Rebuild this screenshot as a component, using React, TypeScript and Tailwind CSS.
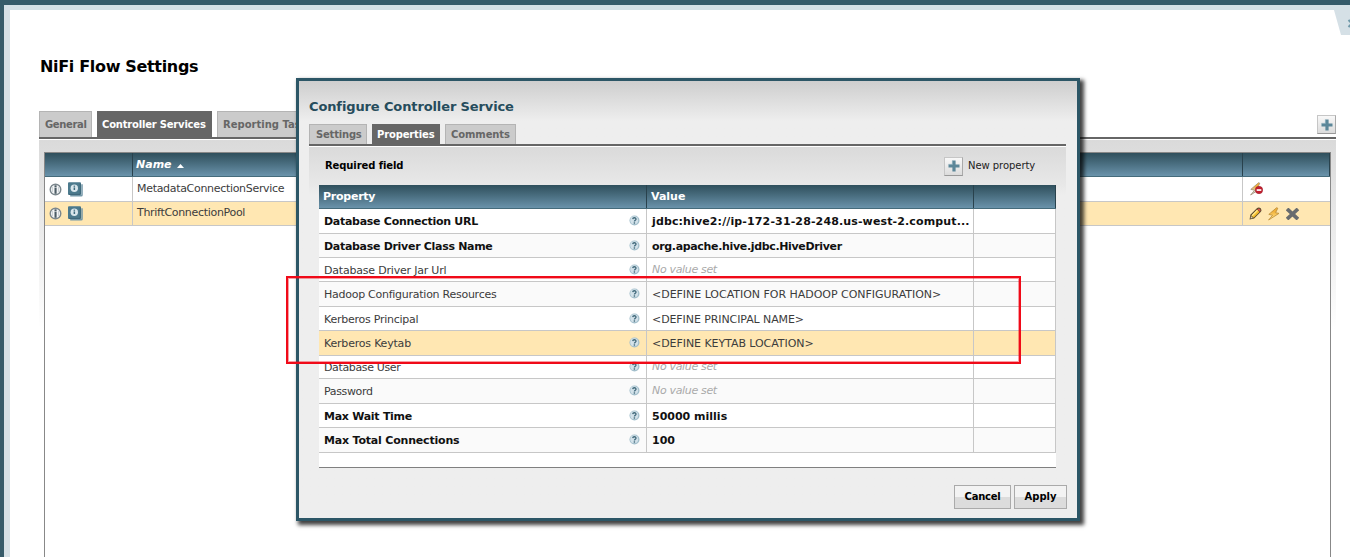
import React from "react";

type Property = { name: string; value?: string; required?: boolean; h: string; bg: string; nt: string; vt?: string };

const properties: Property[] = [
  { name: "Database Connection URL", value: "jdbc:hive2://ip-172-31-28-248.us-west-2.comput...", required: true, h: "h-[25px]", bg: "bg-white", nt: "tracking-[-0.28px]", vt: "tracking-[0.13px]" },
  { name: "Database Driver Class Name", value: "org.apache.hive.jdbc.HiveDriver", required: true, h: "h-[24px]", bg: "bg-[#fafafa]", nt: "tracking-[-0.3px]", vt: "tracking-[-0.34px]" },
  { name: "Database Driver Jar Url", h: "h-[24px]", bg: "bg-white", nt: "tracking-[-0.2px]" },
  { name: "Hadoop Configuration Resources", value: "<DEFINE LOCATION FOR HADOOP CONFIGURATION>", h: "h-[25px]", bg: "bg-[#fafafa]", nt: "tracking-[-0.26px]", vt: "tracking-[-0.03px]" },
  { name: "Kerberos Principal", value: "<DEFINE PRINCIPAL NAME>", h: "h-[24px]", bg: "bg-white", nt: "tracking-[-0.25px]", vt: "tracking-[-0.09px]" },
  { name: "Kerberos Keytab", value: "<DEFINE KEYTAB LOCATION>", h: "h-[25px]", bg: "bg-[#ffe7b2]", nt: "tracking-[-0.2px]", vt: "tracking-[-0.06px]" },
  { name: "Database User", h: "h-[23px]", bg: "bg-white", nt: "tracking-[-0.36px]" },
  { name: "Password", h: "h-[25px]", bg: "bg-[#fafafa]", nt: "tracking-[-0.35px]" },
  { name: "Max Wait Time", value: "50000 millis", required: true, h: "h-[24px]", bg: "bg-white", nt: "tracking-[-0.27px]", vt: "tracking-[0px]" },
  { name: "Max Total Connections", value: "100", required: true, h: "h-[25px]", bg: "bg-[#fafafa]", nt: "tracking-[-0.19px]", vt: "tracking-[0px]" },
];

const headerBg = "bg-linear-to-b from-[#2f4f5c] to-[#6a93ab]";

function HelpIcon() {
  return (
    <svg width="11" height="11" viewBox="0 0 11 11" className="mb-[1px] block shrink-0">
      <circle cx="5.5" cy="5.5" r="5" fill="#a3bfcc" />
      <circle cx="5.2" cy="5.2" r="3.9" fill="#d3e2ea" />
      <path d="M3.7 4.1C3.9 2.3 7.2 2.3 7 4.2C6.9 5.2 5.5 5.2 5.4 6.5" fill="none" stroke="#41697a" strokeWidth="1.3" />
      <rect x="4.7" y="7.3" width="1.4" height="1.4" fill="#41697a" />
    </svg>
  );
}

function InfoIcon() {
  return (
    <svg width="13" height="13" viewBox="0 0 13 13" className="block shrink-0">
      <circle cx="6.5" cy="6.5" r="5.3" fill="#f3f5f6" stroke="#7b878d" strokeWidth="1.4" />
      <path d="M3.4 4v5M9.6 4v5" stroke="#c9d0d4" strokeWidth="1" />
      <rect x="5.5" y="2.3" width="2.1" height="1.8" fill="#4c5c65" />
      <rect x="5.5" y="4.6" width="2.1" height="6.2" fill="#4c5c65" />
    </svg>
  );
}

function UsageIcon() {
  return (
    <svg width="15" height="15" viewBox="0 0 15 15" className="block shrink-0">
      <path d="M2.2 13.8h11a.8 .8 0 0 0 .8-.8V2.2" fill="none" stroke="#7397a8" strokeWidth="1.5" />
      <rect x="0" y="0.3" width="13" height="12.7" rx="1" fill="#4c7a8d" />
      <path d="M1 12.4h11.3V1.5" fill="none" stroke="#3a6273" strokeWidth="0.8" />
      <circle cx="6.3" cy="6.2" r="3.7" fill="#d9e6ec" />
      <rect x="5.6" y="3.6" width="1.5" height="1.2" fill="#3f6c7f" />
      <rect x="5.6" y="5.4" width="1.5" height="2.6" fill="#3f6c7f" />
    </svg>
  );
}

function Bolt({ gray = false }: { gray?: boolean }) {
  return (
    <svg width="14" height="14" viewBox="0 0 14 14" className="block shrink-0">
      <defs>
        <linearGradient id={gray ? "boltGray" : "boltGold"} x1="0" y1="0" x2="0" y2="1">
          <stop offset="0.3" stopColor="#f0b03a" />
          <stop offset="0.75" stopColor={gray ? "#d5d5d5" : "#ffd873"} />
        </linearGradient>
      </defs>
      <path
        d="M9.6 0.7L1.8 7.4L5.6 8.2L1.6 13L12 6.4L8.6 5.7L10.8 1.2Z"
        fill={gray ? "url(#boltGray)" : "url(#boltGold)"}
        stroke={gray ? "#a08f72" : "#b98b3a"}
        strokeWidth="0.8"
        strokeLinejoin="round"
      />
      {gray && (
        <>
          <circle cx="10" cy="8" r="3.7" fill="#c3202f" stroke="#961522" strokeWidth="0.5" />
          <rect x="7.7" y="7.2" width="4.6" height="1.7" fill="#fff" />
        </>
      )}
    </svg>
  );
}

function Pencil() {
  return (
    <svg width="13" height="13" viewBox="0 0 13 13" className="block shrink-0">
      <path d="M0.6 12.4L1.4 7.8L7.6 1.4Q9.8 -0.3 11.7 1.3Q13.1 3.2 11.6 5.1L5.1 11.6Z" fill="#54462c" />
      <path d="M2.4 8.4L8 2.5L10.5 4.9L4.7 10.7Z" fill="#f5bd2b" />
      <path d="M2.5 8.2L8 2.7L9 3.7L3.6 9.3Z" fill="#ffe68a" />
      <path d="M8.3 2.3Q9.8 0.7 11.1 1.9Q12.3 3.2 10.7 4.8Z" fill="#d9534a" />
      <path d="M2 9L4 11L1.5 11.5Z" fill="#e4cfa5" />
    </svg>
  );
}

function Cross() {
  return (
    <svg width="13" height="12" viewBox="0 0 13 12" className="block shrink-0">
      <path d="M2.4 2.2L10.6 9.8M10.6 2.2L2.4 9.8" stroke="#686b6e" strokeWidth="3.7" strokeLinecap="square" />
    </svg>
  );
}

function PlusButton() {
  return (
    <div className="flex h-[19px] w-[19px] shrink-0 items-center justify-center border border-t-[#c6c6c6] border-l-[#c6c6c6] border-r-[#aaa] border-b-[#999] bg-linear-to-b from-[#f8f8f8] to-[#dcdcdc]">
      <svg width="12" height="12" viewBox="0 0 12 12" className="block">
        <path d="M4.4 0.5h3.2v3.9h3.9v3.2H7.6v3.9H4.4V7.6H0.5V4.4h3.9Z" fill="#5c8799" />
        <path d="M4.4 0.5v3.9H0.5" fill="none" stroke="#82a7b7" strokeWidth="0.7" />
      </svg>
    </div>
  );
}

function ServiceRow({ name, selected }: { name: string; selected?: boolean }) {
  return (
    <div className={"flex shrink-0 border-b border-[#c7c7c7] " + (selected ? "h-[24px] bg-[#ffe7b2]" : "h-[25px] bg-white")}>
      <div className="flex w-[88px] items-center gap-[6px] border-r border-[#c7c7c7] pl-[4px]">
        <InfoIcon />
        <UsageIcon />
      </div>
      <div className="flex w-[1110px] items-center border-r border-[#c7c7c7] pl-[4px] text-[11px] leading-[14px] text-[#3c3c3c]">
        <span className="-mt-[1px] tracking-[-0.31px]">{name}</span>
      </div>
      <div className="flex items-center gap-[5px] pl-[6px]">
        {selected ? (
          <>
            <Pencil />
            <Bolt />
            <Cross />
          </>
        ) : (
          <Bolt gray />
        )}
      </div>
    </div>
  );
}

function Dialog() {
  return (
    <div className="absolute top-[78px] left-[296px] flex h-[443px] w-[784px] flex-col border-[3px] border-[#2c5666] bg-[#eeeeee] bg-linear-to-b from-[#cecece] to-[#eeeeee] to-[40px] px-[10px] shadow-[3px_3px_4px_1px_rgba(0,0,0,0.75)]">
      <h2 className="mt-[17px] h-[18px] text-[13px] leading-[18px] font-bold tracking-[-0.12px] text-[#264c5c]">Configure Controller Service</h2>
      <div className="mt-[8px] flex h-[20px] gap-[5px] text-[10px] leading-[19px] font-bold text-[#666]">
        <div className="w-[58px] border border-b-0 border-[#b4b4b4] bg-[#cbcbcb] pl-[6px] tracking-[-0.2px]">Settings</div>
        <div className="w-[68px] border border-b-0 border-[#666] bg-[#666] pl-[4px] tracking-[-0.15px] text-white">Properties</div>
        <div className="w-[71px] border border-b-0 border-[#b4b4b4] bg-[#cbcbcb] pl-[5px] tracking-[-0.1px]">Comments</div>
      </div>
      <div className="h-[3px] w-[757px] shrink-0 border-b border-white bg-[#666]" />
      <div className="flex h-[38px] w-[757px] shrink-0 items-center bg-linear-to-b from-[#dadada] to-[#e8e8e8] pr-[28px] pl-[16px]">
        <span className="flex-1 text-[10px] leading-[14px] font-bold tracking-[-0.1px] text-black">Required field</span>
        <PlusButton />
        <span className="ml-[5px] w-[70px] text-[10px] leading-[14px] tracking-[-0.05px] whitespace-nowrap text-[#222]">New property</span>
      </div>
      <div className="flex w-[757px] bg-linear-to-b from-[#e8e8e8] to-[#eeeeee] to-[10px] pl-[10px]">
        <div className="flex h-[283px] w-[737px] shrink-0 flex-col border-b border-[#808080] bg-white">
          <div className={"flex h-[24px] shrink-0 border-b border-[#456b7b] text-[11px] leading-[23px] font-bold text-white " + headerBg}>
            <div className="w-[328px] border-r border-[#29424d] pl-[4px] tracking-[-0.25px]">Property</div>
            <div className="w-[327px] border-r border-[#29424d] pl-[4px]">Value</div>
            <div className="flex-1 border-r border-[#29424d]" />
          </div>
          {properties.map((p) => (
            <div key={p.name} className={"flex shrink-0 border-b border-[#c7c7c7] text-[11px] leading-[14px] " + p.h + " " + p.bg}>
              <div className="flex w-[328px] items-center justify-between border-r border-[#c7c7c7] pr-[6px] pl-[5px]">
                <span className={(p.required ? "mt-[2px] font-bold text-[#111] " : "mt-[2px] text-[#3c3c3c] ") + p.nt}>{p.name}</span>
                <HelpIcon />
              </div>
              <div className="flex w-[327px] items-center border-r border-[#c7c7c7] pl-[5px] whitespace-nowrap">
                {p.value ? (
                  <span className={(p.required ? "mt-[2px] font-bold text-[#111] " : "mt-[2px] text-[#3c3c3c] ") + p.vt}>{p.value}</span>
                ) : (
                  <span className="tracking-[-0.33px] text-[#aaa] italic">No value set</span>
                )}
              </div>
              <div className="flex-1 border-r border-[#c7c7c7]" />
            </div>
          ))}
        </div>
      </div>
      <div className="mt-[17px] flex justify-end gap-[3px] text-[10px] leading-[22px] font-bold text-black">
        <button className="h-[24px] w-[57px] border border-[#aaa] bg-linear-to-b from-[#f3f3f3] from-50% to-[#dcdcdc] to-50% tracking-[-0.25px]">Cancel</button>
        <button className="h-[24px] w-[53px] border border-[#aaa] bg-linear-to-b from-[#f3f3f3] from-50% to-[#dcdcdc] to-50%">Apply</button>
      </div>
    </div>
  );
}

export default function App() {
  return (
    <div className="relative h-[557px] w-[1350px] overflow-hidden bg-[#365b6a] pt-[5px] pl-[4px] font-['DejaVu_Sans',sans-serif]">
      <div className="flex h-[552px] flex-col border-t-[5px] border-l-[6px] border-[#d5e0e6] bg-white">
        <div className="flex h-[101px] shrink-0 items-start justify-between pl-[30px]">
          <h1 className="mt-[47px] text-[16px] leading-[20px] font-bold tracking-[-0.33px] text-black">NiFi Flow Settings</h1>
          <svg width="16" height="25" viewBox="0 0 16 25" className="block">
            <path d="M0 0H16V25H7Z" fill="#d5e0e6" />
            <path d="M14.5 10l4 4M14.5 17l4-4" stroke="#6f98a8" strokeWidth="2" />
          </svg>
        </div>
        <div className="flex h-[26px] w-[1326px] shrink-0 items-start gap-[5px] pl-[29px] text-[10px] leading-[26px] font-bold text-[#666]">
          <div className="h-full w-[53px] border border-b-0 border-[#b4b4b4] bg-[#cbcbcb] pl-[5px] tracking-[-0.35px]">General</div>
          <div className="h-full w-[115px] border border-b-0 border-[#666] bg-[#666] pl-[4px] tracking-[-0.2px] whitespace-nowrap text-white">Controller Services</div>
          <div className="h-full w-[102px] border border-b-0 border-[#b4b4b4] bg-[#cbcbcb] pl-[5px] whitespace-nowrap">Reporting Tasks</div>
          <div className="flex flex-1 justify-end pt-[4px]">
            <PlusButton />
          </div>
        </div>
        <div className="ml-[29px] h-[3px] w-[1297px] shrink-0 border-b border-white bg-[#666]" />
        <div className="ml-[29px] flex w-[1297px] flex-1 flex-col bg-linear-to-b from-[#dadada] to-white to-[190px] pt-[12px] pr-[5px] pl-[5px]">
          <div className="flex flex-1 flex-col border-t border-r border-l border-[#888] bg-white">
            <div className={"flex h-[24px] shrink-0 border-b border-[#456b7b] text-[11px] leading-[21px] font-bold text-white italic " + headerBg}>
              <div className="w-[88px] border-r border-[#29424d]" />
              <div className="flex w-[1110px] items-center border-r border-[#29424d] pl-[3px]">
                <span>Name</span>
                <svg width="7" height="4" viewBox="0 0 7 4" className="mt-[3px] ml-[5px] block">
                  <path d="M0 4L3.5 0L7 4Z" fill="#fff" />
                </svg>
              </div>
              <div className="flex-1 border-r border-[#29424d]" />
            </div>
            <ServiceRow name="MetadataConnectionService" />
            <ServiceRow name="ThriftConnectionPool" selected />
          </div>
        </div>
      </div>
      <Dialog />
      <div className="absolute top-[276px] left-[286px] h-[88px] w-[735px] border-2 border-[#f00a18] shadow-[inset_0_0_0_1px_rgba(240,10,24,0.4)]" />
    </div>
  );
}
